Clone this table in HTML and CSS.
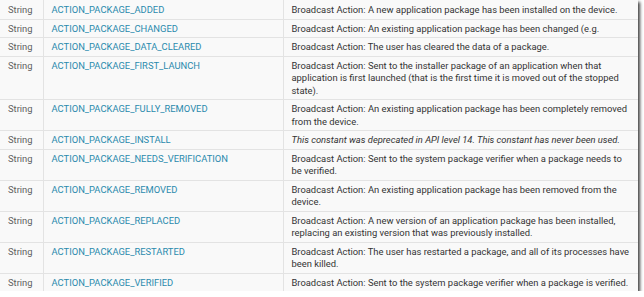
FILE: index.html
```html
<!DOCTYPE html>
<html>
<head>
<meta charset="utf-8">
<link rel="stylesheet" href="styles.css">
</head>
<body>
<div class="frame">
<table class="consts">
<colgroup><col class="c-type"><col class="c-name"><col class="c-desc"></colgroup>
<tr><td class="type">String</td><td class="name"><a>ACTION_PACKAGE_ADDED</a></td><td class="desc">Broadcast Action: A new application package has been installed on the device.</td></tr>
<tr><td class="type">String</td><td class="name"><a>ACTION_PACKAGE_CHANGED</a></td><td class="desc">Broadcast Action: An existing application package has been changed (e.g.</td></tr>
<tr><td class="type">String</td><td class="name"><a>ACTION_PACKAGE_DATA_CLEARED</a></td><td class="desc">Broadcast Action: The user has cleared the data of a package.</td></tr>
<tr><td class="type">String</td><td class="name"><a>ACTION_PACKAGE_FIRST_LAUNCH</a></td><td class="desc">Broadcast Action: Sent to the installer package of an application when that application is first launched (that is the first time it is moved out of the stopped state).</td></tr>
<tr><td class="type">String</td><td class="name"><a>ACTION_PACKAGE_FULLY_REMOVED</a></td><td class="desc">Broadcast Action: An existing application package has been completely removed from the device.</td></tr>
<tr><td class="type">String</td><td class="name"><a>ACTION_PACKAGE_INSTALL</a></td><td class="desc"><em>This constant was deprecated in API level 14. This constant has never been used.</em></td></tr>
<tr><td class="type">String</td><td class="name"><a>ACTION_PACKAGE_NEEDS_VERIFICATION</a></td><td class="desc">Broadcast Action: Sent to the system package verifier when a package needs to be verified.</td></tr>
<tr><td class="type">String</td><td class="name"><a>ACTION_PACKAGE_REMOVED</a></td><td class="desc">Broadcast Action: An existing application package has been removed from the device.</td></tr>
<tr><td class="type">String</td><td class="name"><a>ACTION_PACKAGE_REPLACED</a></td><td class="desc">Broadcast Action: A new version of an application package has been installed, replacing an existing version that was previously installed.</td></tr>
<tr><td class="type">String</td><td class="name"><a>ACTION_PACKAGE_RESTARTED</a></td><td class="desc">Broadcast Action: The user has restarted a package, and all of its processes have been killed.</td></tr>
<tr><td class="type">String</td><td class="name"><a>ACTION_PACKAGE_VERIFIED</a></td><td class="desc">Broadcast Action: Sent to the system package verifier when a package is verified.</td></tr>
</table>
</div>
</body>
</html>
```
FILE: styles.css
```css
html, body {
  margin: 0;
  padding: 0;
  background: #ffffff;
}
.frame {
  width: 638px;
  height: 291px;
  overflow: hidden;
  background: #f9f9f9;
  box-shadow: 2px 2px 3px rgba(0,0,0,0.75);
}
.consts {
  border-collapse: collapse;
  width: 638px;
  table-layout: fixed;
  margin-top: 0;
  font-family: Roboto, "Liberation Sans", sans-serif;
  font-size: 9.4px;
  line-height: 12.5px;
  color: #333;
}
.c-type { width: 43px; }
.c-name { width: 240px; }
.c-desc { width: 355px; }
.consts td {
  border: 1px solid #e3e3e3;
  padding: 3px 8px 2px 8px;
  vertical-align: top;
  white-space: normal;
}
.consts tr:first-child td { border-top-color: #f9f9f9; }
.consts tr td:first-child { border-left: none; }
.consts tr td:last-child { border-right: none; }
.type {
  color: #5f5f5f;
  padding-left: 8px !important;
  padding-right: 0 !important;
}
.name a {
  color: #2a8aad;
  white-space: nowrap;
}
.desc {
  padding-right: 8px !important;
}
.desc em { font-style: italic; }
```
